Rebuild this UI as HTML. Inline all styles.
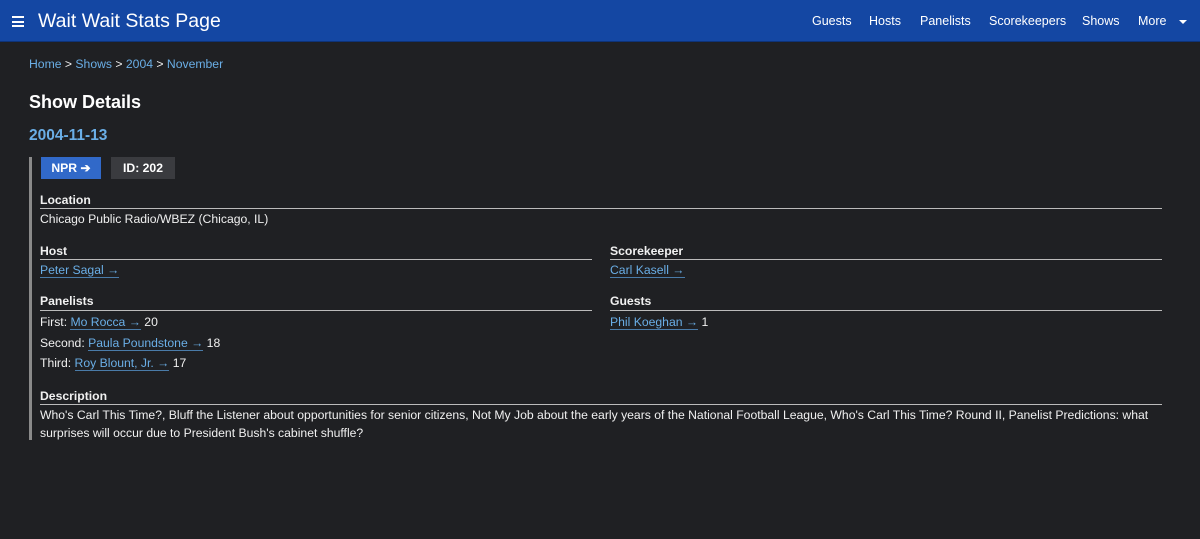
<!DOCTYPE html>
<html><head><style>
*{margin:0;padding:0;box-sizing:border-box}
body{width:1200px;height:539px;background:#1f2023;color:#f0f0f0;font-family:"Liberation Sans",sans-serif;font-size:12.2px;overflow:hidden;position:relative}
.hdr{height:42px;background:#1447a3;border-bottom:1px solid #0e3378;position:relative}
.hdr .ham{position:absolute;left:12px;top:16px;width:12px}
.hdr .ham i{display:block;height:2px;background:#fff;margin-bottom:2.5px}
.hdr .t{position:absolute;left:38px;top:10px;font-size:19.5px;color:#fff}
.nav{position:absolute;top:14px;font-size:12.5px;color:#fff}
a{color:#6aaee6;text-decoration:none}
.ul{border-bottom:1px solid #4a7ba8}
.abs{position:absolute;white-space:nowrap}
.lbl{font-weight:bold;font-size:12.2px}
.line{position:absolute;height:1px;background:#bbb}
</style></head><body>
<div class="hdr"><div class="ham"><i></i><i></i><i></i></div><div class="t">Wait Wait Stats Page</div>
<span class="nav" style="left:812px">Guests</span>
<span class="nav" style="left:869px">Hosts</span>
<span class="nav" style="left:920px">Panelists</span>
<span class="nav" style="left:989px">Scorekeepers</span>
<span class="nav" style="left:1082px">Shows</span>
<span class="nav" style="left:1138px">More</span>
<span class="nav" style="left:1179px;top:20px;border-left:4px solid transparent;border-right:4px solid transparent;border-top:4px solid #fff;width:0;height:0"></span>
</div>
<div class="abs" style="left:29px;top:57px"><a>Home</a> &gt; <a>Shows</a> &gt; <a>2004</a> &gt; <a>November</a></div>
<div class="abs" style="left:29px;top:92px;font-size:18px;font-weight:bold;color:#fff">Show Details</div>
<div class="abs" style="left:29px;top:127px;font-size:15.5px;font-weight:bold"><a>2004-11-13</a></div>
<div style="position:absolute;left:29px;top:157px;width:3px;height:283px;background:#8a8a8a"></div>
<div class="abs" style="left:41px;top:157px;width:60px;height:22px;background:#3169c9;color:#fff;font-weight:bold;text-align:center;line-height:22px">NPR ➔</div>
<div class="abs" style="left:111px;top:157px;width:64px;height:22px;background:#3a3b3f;color:#fff;font-weight:bold;text-align:center;line-height:22px">ID: 202</div>
<div class="abs lbl" style="left:40px;top:193px">Location</div><div class="line" style="left:40px;top:208px;width:1122px"></div>
<div class="abs" style="left:40px;top:212px">Chicago Public Radio/WBEZ (Chicago, IL)</div>
<div class="abs lbl" style="left:40px;top:244px">Host</div><div class="line" style="left:40px;top:259px;width:552px"></div>
<div class="abs" style="left:40px;top:263px"><a class="ul">Peter Sagal →</a></div>
<div class="abs lbl" style="left:610px;top:244px">Scorekeeper</div><div class="line" style="left:610px;top:259px;width:552px"></div>
<div class="abs" style="left:610px;top:263px"><a class="ul">Carl Kasell →</a></div>
<div class="abs lbl" style="left:40px;top:294px">Panelists</div><div class="line" style="left:40px;top:310px;width:552px"></div>
<div class="abs" style="left:40px;top:315px">First: <a class="ul">Mo Rocca →</a> 20</div>
<div class="abs" style="left:40px;top:336px">Second: <a class="ul">Paula Poundstone →</a> 18</div>
<div class="abs" style="left:40px;top:356px">Third: <a class="ul">Roy Blount, Jr. →</a> 17</div>
<div class="abs lbl" style="left:610px;top:294px">Guests</div><div class="line" style="left:610px;top:310px;width:552px"></div>
<div class="abs" style="left:610px;top:315px"><a class="ul">Phil Koeghan →</a> 1</div>
<div class="abs lbl" style="left:40px;top:389px">Description</div><div class="line" style="left:40px;top:404px;width:1122px"></div>
<div style="position:absolute;left:40px;top:406px;width:1110px;line-height:18px">Who's Carl This Time?, Bluff the Listener about opportunities for senior citizens, Not My Job about the early years of the National Football League, Who's Carl This Time? Round II, Panelist Predictions: what<br>surprises will occur due to President Bush's cabinet shuffle?</div>
</body></html>
